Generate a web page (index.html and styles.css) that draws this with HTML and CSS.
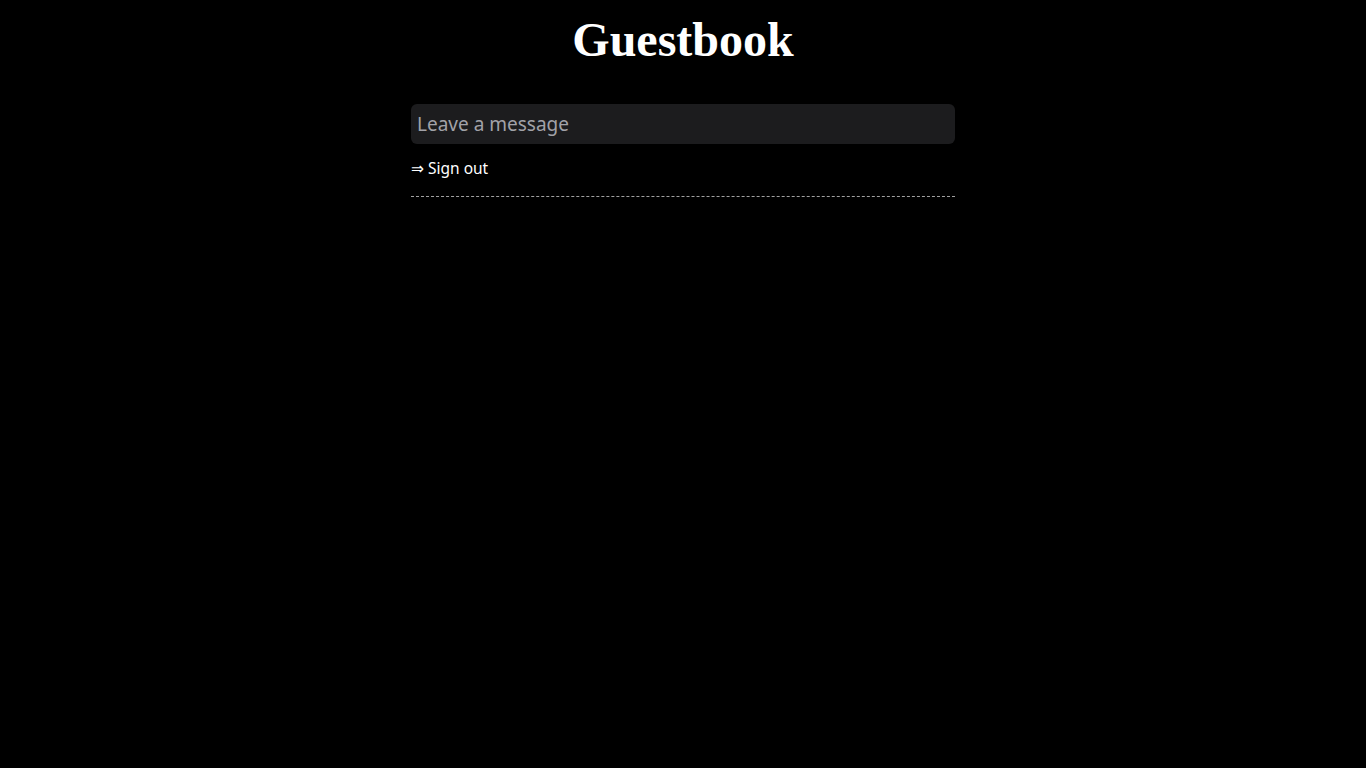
FILE: index.html
```html
<!DOCTYPE html>
<html lang="en">
<head>
<meta charset="utf-8">
<title>Guestbook</title>
<link rel="stylesheet" href="styles.css">
</head>
<body>
<main class="page">
  <h1 class="title">Guestbook</h1>
  <form class="form">
    <input class="message" type="text" placeholder="Leave a message">
  </form>
  <a class="signout" href="#">⇒ Sign out</a>
  <hr class="divider">
</main>
</body>
</html>
```

FILE: styles.css
```css
html, body {
  margin: 0;
  padding: 0;
  background: #000;
  color: #fff;
}
body {
  font-family: "Noto Sans", "DejaVu Sans", sans-serif;
}
.page {
  width: 544px;
  margin: 0 auto;
  display: flex;
  flex-direction: column;
}
.title {
  font-family: "Liberation Serif", serif;
  font-weight: bold;
  font-size: 48px;
  line-height: 55px;
  text-align: center;
  margin: 12px 0 37px;
}
.form {
  margin: 0;
}
.message {
  box-sizing: border-box;
  width: 100%;
  height: 40px;
  border: none;
  border-radius: 6px;
  background: #1c1c1e;
  color: #fff;
  font-family: "Noto Sans", sans-serif;
  font-size: 19px;
  padding: 0 6px;
  outline: none;
}
.message::placeholder {
  color: #a2a2a8;
}
.signout {
  color: #fff;
  text-decoration: none;
  font-size: 15.5px;
  line-height: 20px;
  margin-top: 14px;
  align-self: flex-start;
}
.divider {
  border: none;
  border-top: 1px dashed #a0a0a0;
  margin: 18px 0 0;
  height: 0;
}
```
